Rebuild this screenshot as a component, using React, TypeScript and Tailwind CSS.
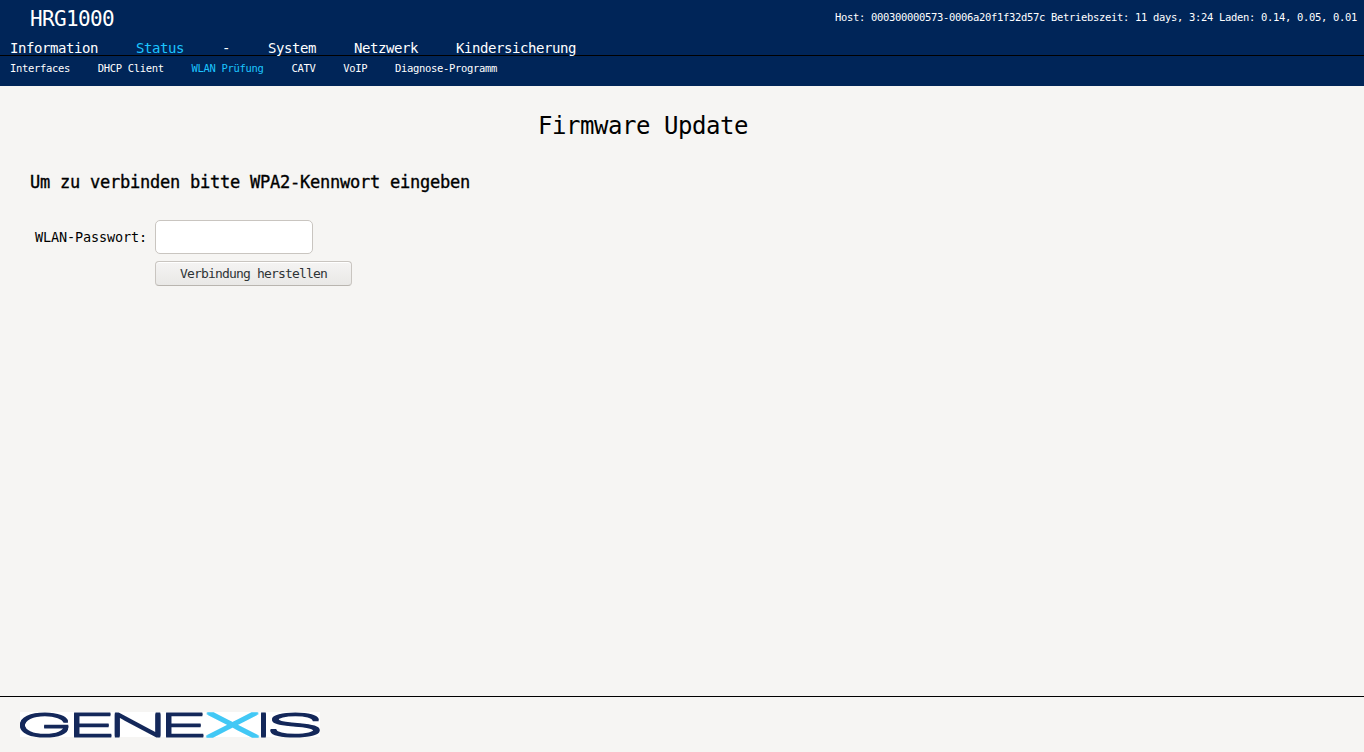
const mainNav = [
  { label: 'Information' },
  { label: 'Status', active: true },
  { label: '-' },
  { label: 'System' },
  { label: 'Netzwerk' },
  { label: 'Kindersicherung' },
];

const subNav = [
  { label: 'Interfaces' },
  { label: 'DHCP Client' },
  { label: 'WLAN Prüfung', active: true },
  { label: 'CATV' },
  { label: 'VoIP' },
  { label: 'Diagnose-Programm' },
];

const logoLetters = [
  { char: 'G', center: 24.5, scale: 2.58 },
  { char: 'E', center: 71, scale: 2.85 },
  { char: 'N', center: 117.5, scale: 2.6 },
  { char: 'E', center: 163, scale: 2.85 },
  { char: 'X', center: 212.5, scale: 2.75 },
  { char: 'I', center: 243.5, scale: 2.6 },
  { char: 'S', center: 275, scale: 3.3 },
];

function Logo() {
  return (
    <svg width="300" height="25" viewBox="0 0 300 25" className="block overflow-visible font-['Inter',sans-serif] text-[30px] font-thin" role="img" aria-label="GENEXIS">
      <rect width="300" height="25" fill="#fff" />
      {logoLetters.map(({ char, center, scale }, i) => {
        const isX = char === 'X';
        const color = isX ? '#42c8f5' : '#14285a';
        return (
          <text
            key={i}
            transform={`translate(${center} 22.5) scale(${scale} 1)`}
            textAnchor="middle"
            fill={color}
            stroke={color}
            strokeWidth={isX ? 1.5 : 1.1}
            className={
              isX
                ? '[filter:drop-shadow(0_1px_0_#42c8f5)_drop-shadow(0_1px_0_#42c8f5)]'
                : '[filter:drop-shadow(0_1px_0_#14285a)_drop-shadow(0_1px_0_#14285a)]'
            }
          >
            {char}
          </text>
        );
      })}
    </svg>
  );
}

export default function App() {
  return (
    <div className="flex h-[752px] w-[1364px] flex-col overflow-hidden bg-[#f6f5f3] font-['DejaVu_Sans_Mono',monospace] text-black">
      <header className="h-[86px] shrink-0 bg-[#002558] text-white">
        <div className="flex h-[41px] items-start justify-between pr-[7px] pl-[30px]">
          <h1 className="pt-[7px] text-[21px] leading-6 tracking-[-0.643px]">HRG1000</h1>
          <p className="pt-[9px] text-[10.5px] leading-4 tracking-[-0.322px] whitespace-pre">
            Host: 000300000573-0006a20f1f32d57c Betriebszeit: 11 days, 3:24 Laden: 0.14, 0.05, 0.01
          </p>
        </div>
        <nav className="flex h-[15px] gap-[38px] border-b border-black pl-[10px] text-[14px] leading-[15px] tracking-[-0.429px]">
          {mainNav.map((item) => (
            <a key={item.label} className={item.active ? 'text-[#1cc4ff]' : ''}>
              {item.label}
            </a>
          ))}
        </nav>
        <nav className="flex gap-[27.8px] pt-[4px] pl-[10px] text-[10.5px] leading-4 tracking-[-0.322px]">
          {subNav.map((item) => (
            <a key={item.label} className={item.active ? 'text-[#1cc4ff]' : ''}>
              {item.label}
            </a>
          ))}
        </nav>
      </header>

      <main className="flex-1">
        <h2 className="w-[1286px] pt-[24px] text-center text-[24px] leading-8 tracking-[-0.449px]">Firmware Update</h2>
        <div className="pt-[28px] pl-[30px]">
          <h3 className="text-[17px] leading-6 tracking-[-0.235px] [-webkit-text-stroke:0.35px_black]">
            Um zu verbinden bitte WPA2-Kennwort eingeben
          </h3>
          <form className="grid grid-cols-[120px_auto] justify-start gap-y-[7px] pt-[26px] pl-[5px]">
            <label htmlFor="password" className="self-center text-[13.5px] tracking-[-0.128px]">
              WLAN-Passwort:
            </label>
            <input id="password" type="password" className="h-[34px] w-[158px] rounded-[5px] border border-[#c9c5c0] bg-white px-2" />
            <button
              type="button"
              className="col-start-2 h-[25px] w-[197px] rounded-[4px] border border-[#c9c5c0] border-b-[#b9b5af] bg-linear-to-b from-[#f5f4f3] to-[#e9e8e6] text-[13px] leading-[23px] tracking-[-0.826px] text-[#2e3436] shadow-[inset_0_1px_0_#fff]"
            >
              Verbindung herstellen
            </button>
          </form>
        </div>
      </main>

      <footer className="h-[56px] shrink-0 border-t border-black pt-[15px] pl-[20px]">
        <Logo />
      </footer>
    </div>
  );
}
